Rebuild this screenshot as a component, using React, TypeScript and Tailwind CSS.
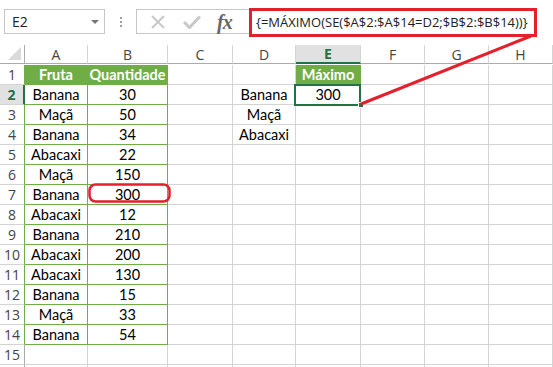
import React from "react";

const cols = ["A", "B", "C", "D", "E", "F", "G", "H"];

const data: [string, string][] = [
  ["Banana", "30"],
  ["Maçã", "50"],
  ["Banana", "34"],
  ["Abacaxi", "22"],
  ["Maçã", "150"],
  ["Banana", "300"],
  ["Abacaxi", "12"],
  ["Banana", "210"],
  ["Abacaxi", "200"],
  ["Abacaxi", "130"],
  ["Banana", "15"],
  ["Maçã", "33"],
  ["Banana", "54"],
];

const lookup: Record<number, string> = { 2: "Banana", 3: "Maçã", 4: "Abacaxi" };

function Toolbar() {
  return (
    <div className="h-[45px] flex items-start pt-[8px] font-['Open_Sans',sans-serif]">
      {/* Name box */}
      <div className="ml-[4px] mt-[1px] w-[101px] h-[25px] border border-[#c6c6c6] flex items-center pl-[7px] pr-[5px] text-[14px] text-[#222]">
        <span className="flex-1">E2</span>
        <span className="w-0 h-0 border-l-[4px] border-r-[4px] border-t-[4px] border-l-transparent border-r-transparent border-t-[#777]" />
      </div>
      {/* Grip */}
      <div className="w-[31px] h-[27px] flex flex-col items-center justify-center gap-[2px]">
        <span className="w-[2px] h-[2px] bg-[#a0a0a0]" />
        <span className="w-[2px] h-[2px] bg-[#a0a0a0]" />
        <span className="w-[2px] h-[2px] bg-[#a0a0a0]" />
      </div>
      {/* fx buttons */}
      <div className="mt-[1px] w-[113px] h-[25px] border border-[#c6c6c6] border-r-0 flex items-center">
        <svg width="16" height="14" viewBox="0 0 16 14" className="ml-[13px]">
          <path d="M2 1 L14 13 M14 1 L2 13" stroke="#c8c8c8" strokeWidth="2" fill="none" />
        </svg>
        <svg width="18" height="14" viewBox="0 0 18 14" className="ml-[17px]">
          <path d="M1 7 L6.5 12.5 L17 1.5" stroke="#c8c8c8" strokeWidth="3" fill="none" />
        </svg>
        <span className="ml-[16px] font-['Liberation_Serif',serif] italic font-bold text-[20px] text-[#666] leading-none tracking-[-1px]">
          fx
        </span>
      </div>
      {/* Formula */}
      <div className="w-[288px] h-[29px] border-[3px] border-[#e3202c] flex items-center pl-[4px] text-[13px] text-[#222] whitespace-nowrap">
        {"{=MÁXIMO(SE($A$2:$A$14=D2;$B$2:$B$14))}"}
      </div>
    </div>
  );
}

function Cell({
  children,
  className = "",
}: {
  children?: React.ReactNode;
  className?: string;
}) {
  return (
    <div className={`h-full flex items-center justify-center border-r border-b whitespace-nowrap ${className}`}>
      {children}
    </div>
  );
}

export default function App() {
  const rows = Array.from({ length: 16 }, (_, i) => i + 1);

  return (
    <div className="relative w-[553px] h-[367px] overflow-hidden bg-white">
      <Toolbar />

      <div className="grid grid-cols-[25px_63px_80px_65px_63px_65px_64px_64px_64px] auto-rows-[20px] font-['Lato',sans-serif] text-[14.5px] text-black">
        {/* header row */}
        <div className="h-[19px] relative border-r border-b border-[#ababab]">
          <div className="absolute right-[3px] bottom-[3px] w-0 h-0 border-l-[13px] border-t-[13px] border-l-transparent border-t-transparent border-r-0 border-b-[13px] border-b-[#dadada]" />
        </div>
        {cols.map((c) =>
          c === "E" ? (
            <div
              key={c}
              className="h-[19px] flex items-center justify-center bg-[#e1e1e1] border-r border-[#d4d4d4] border-b-2 border-b-[#217346] font-['Open_Sans',sans-serif] text-[14px] font-bold text-[#217346]"
            >
              {c}
            </div>
          ) : (
            <div
              key={c}
              className="h-[19px] flex items-center justify-center border-r border-[#d4d4d4] border-b border-b-[#ababab] font-['Open_Sans',sans-serif] text-[14px] text-[#444]"
            >
              {c}
            </div>
          )
        )}

        {rows.map((r) => {
          const inTable = r <= 14;
          const item = r >= 2 && r <= 14 ? data[r - 2] : null;
          const selRow = r === 2;
          return (
            <React.Fragment key={r}>
              {/* row header */}
              <div
                className={`h-full flex items-center justify-center border-b border-[#d4d4d4] font-['Open_Sans',sans-serif] text-[14px] ${
                  selRow
                    ? "bg-[#e1e1e1] border-r-2 border-r-[#217346] font-bold text-[#217346]"
                    : inTable
                    ? "border-r border-r-[#70ad47] text-[#444]"
                    : "border-r border-r-[#ababab] text-[#444]"
                }`}
              >
                {r <= 15 ? r : null}
              </div>

              {/* A */}
              {r === 1 ? (
                <Cell className="bg-[#70ad47] border-[#70ad47] text-white font-bold">Fruta</Cell>
              ) : (
                <Cell className={inTable ? "border-[#70ad47]" : "border-[#d4d4d4]"}>{item?.[0]}</Cell>
              )}

              {/* B */}
              {r === 1 ? (
                <Cell className="bg-[#70ad47] border-[#70ad47] text-white font-bold">Quantidade</Cell>
              ) : (
                <Cell className={inTable ? "border-[#70ad47]" : "border-[#d4d4d4]"}>{item?.[1]}</Cell>
              )}

              {/* C */}
              <Cell className="border-[#d4d4d4]" />

              {/* D */}
              <Cell className="border-[#d4d4d4]">{lookup[r]}</Cell>

              {/* E */}
              {r === 1 ? (
                <Cell className="bg-[#70ad47] border-[#70ad47] text-white font-bold">Máximo</Cell>
              ) : r === 2 ? (
                <div className="relative h-full flex items-center justify-center border-r border-b border-[#d4d4d4]">
                  300
                  <div className="absolute -left-[2px] -top-[1px] w-[67px] h-[22px] border-2 border-[#217346]" />
                  <div className="absolute right-[-4px] bottom-[-4px] w-[6px] h-[6px] bg-[#217346] border border-white" />
                </div>
              ) : (
                <Cell className="border-[#d4d4d4]" />
              )}

              <Cell className="border-[#d4d4d4]" />
              <Cell className="border-[#d4d4d4]" />
              <Cell className="border-[#d4d4d4]" />
            </React.Fragment>
          );
        })}
      </div>

      {/* annotations */}
      <svg className="absolute left-0 top-0 pointer-events-none" width="553" height="367">
        <rect x="89.5" y="184.5" width="80" height="17" rx="6" fill="none" stroke="#e3202c" strokeWidth="2.5" />
        <line x1="531" y1="36" x2="361" y2="104" stroke="#e3202c" strokeWidth="3" />
      </svg>
    </div>
  );
}
